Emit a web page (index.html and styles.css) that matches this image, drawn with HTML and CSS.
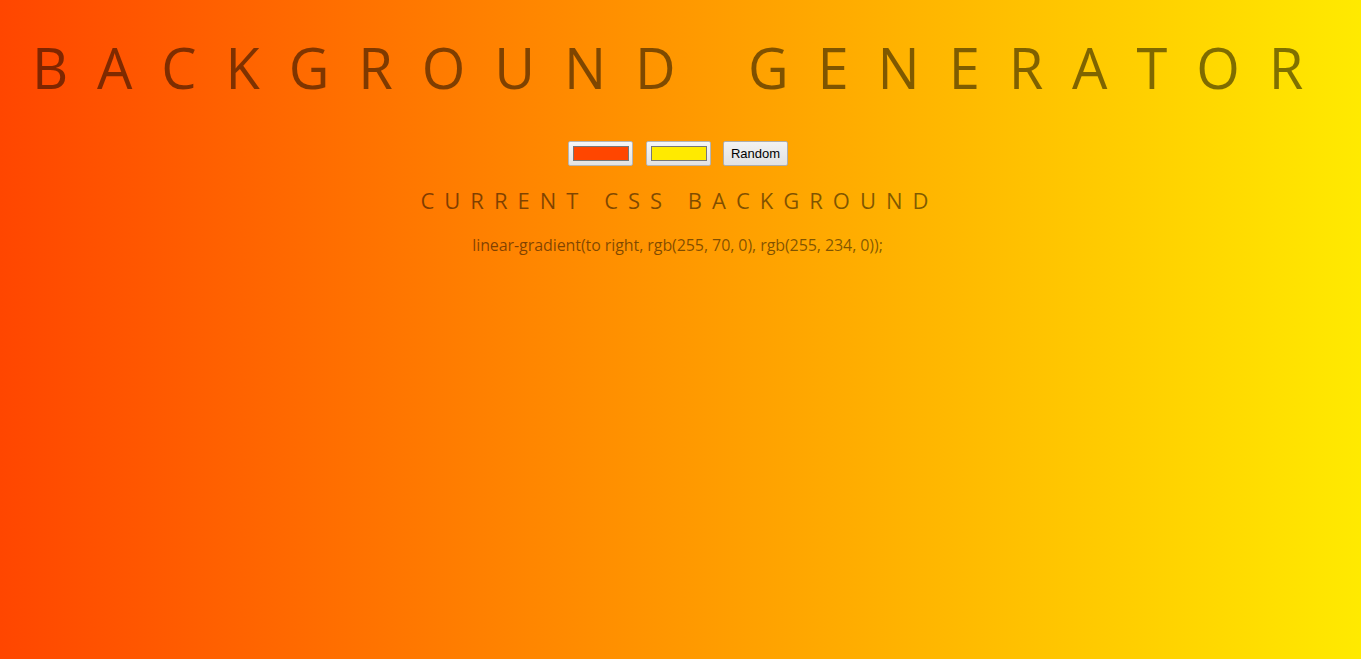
FILE: index.html
```html
<!DOCTYPE html>
<html>
<head>
<meta charset="utf-8">
<title>Background Generator</title>
<link rel="stylesheet" href="styles.css">
</head>
<body>
  <h1 class="title">Background Generator</h1>
  <div class="controls">
    <span class="picker"><span class="swatch swatch-red"></span></span>
    <span class="picker picker-second"><span class="swatch swatch-yellow"></span></span>
    <button class="random">Random</button>
  </div>
  <h2 class="subtitle">Current CSS Background</h2>
  <h3 class="code">linear-gradient(to right, rgb(255, 70, 0), rgb(255, 234, 0));</h3>
</body>
</html>
```
FILE: styles.css
```css
html, body {
  height: 100%;
}
body {
  margin: 0;
  background: linear-gradient(to right, rgb(255, 70, 0), rgb(255, 234, 0));
  color: rgba(0, 0, 0, 0.5);
  font-family: "Open Sans", "Liberation Sans", sans-serif;
  text-align: center;
  display: flex;
  flex-direction: column;
  align-items: center;
}
.title {
  margin: 31px 0 0 0;
  font-size: 56px;
  font-weight: 400;
  line-height: 72px;
  letter-spacing: 28.9px;
  text-transform: uppercase;
  padding-left: 3px;
}
.controls {
  margin-top: 38px;
  display: flex;
  align-items: center;
  padding-right: 5px;
}
.picker {
  box-sizing: border-box;
  width: 65px;
  height: 25px;
  border: 1px solid #b5b5b5;
  border-radius: 2px;
  background: linear-gradient(to bottom, #f6f6f6, #e3e3e3);
  display: flex;
  align-items: center;
  justify-content: center;
}
.picker-second {
  margin-left: 13px;
}
.swatch {
  box-sizing: border-box;
  width: 56px;
  height: 15px;
  border: 1px solid #777;
}
.swatch-red { background: rgb(255, 70, 0); }
.swatch-yellow { background: rgb(255, 234, 0); }
.random {
  box-sizing: border-box;
  width: 65px;
  height: 25px;
  margin-left: 12px;
  border: 1px solid #adadad;
  border-radius: 2px;
  background: linear-gradient(to bottom, #f2f2f2, #e2e2e2);
  font-family: "Liberation Sans", Arial, sans-serif;
  font-size: 13px;
  color: #000;
  padding: 0;
}
.subtitle {
  margin: 19px 0 0 0;
  font-size: 22px;
  font-weight: 400;
  line-height: 30px;
  letter-spacing: 10px;
  text-transform: uppercase;
  padding-right: 2px;
}
.code {
  margin: 20px 0 0 0;
  font-size: 16px;
  font-weight: 400;
  line-height: 20px;
  letter-spacing: -0.08px;
  padding-right: 6px;
}
```
